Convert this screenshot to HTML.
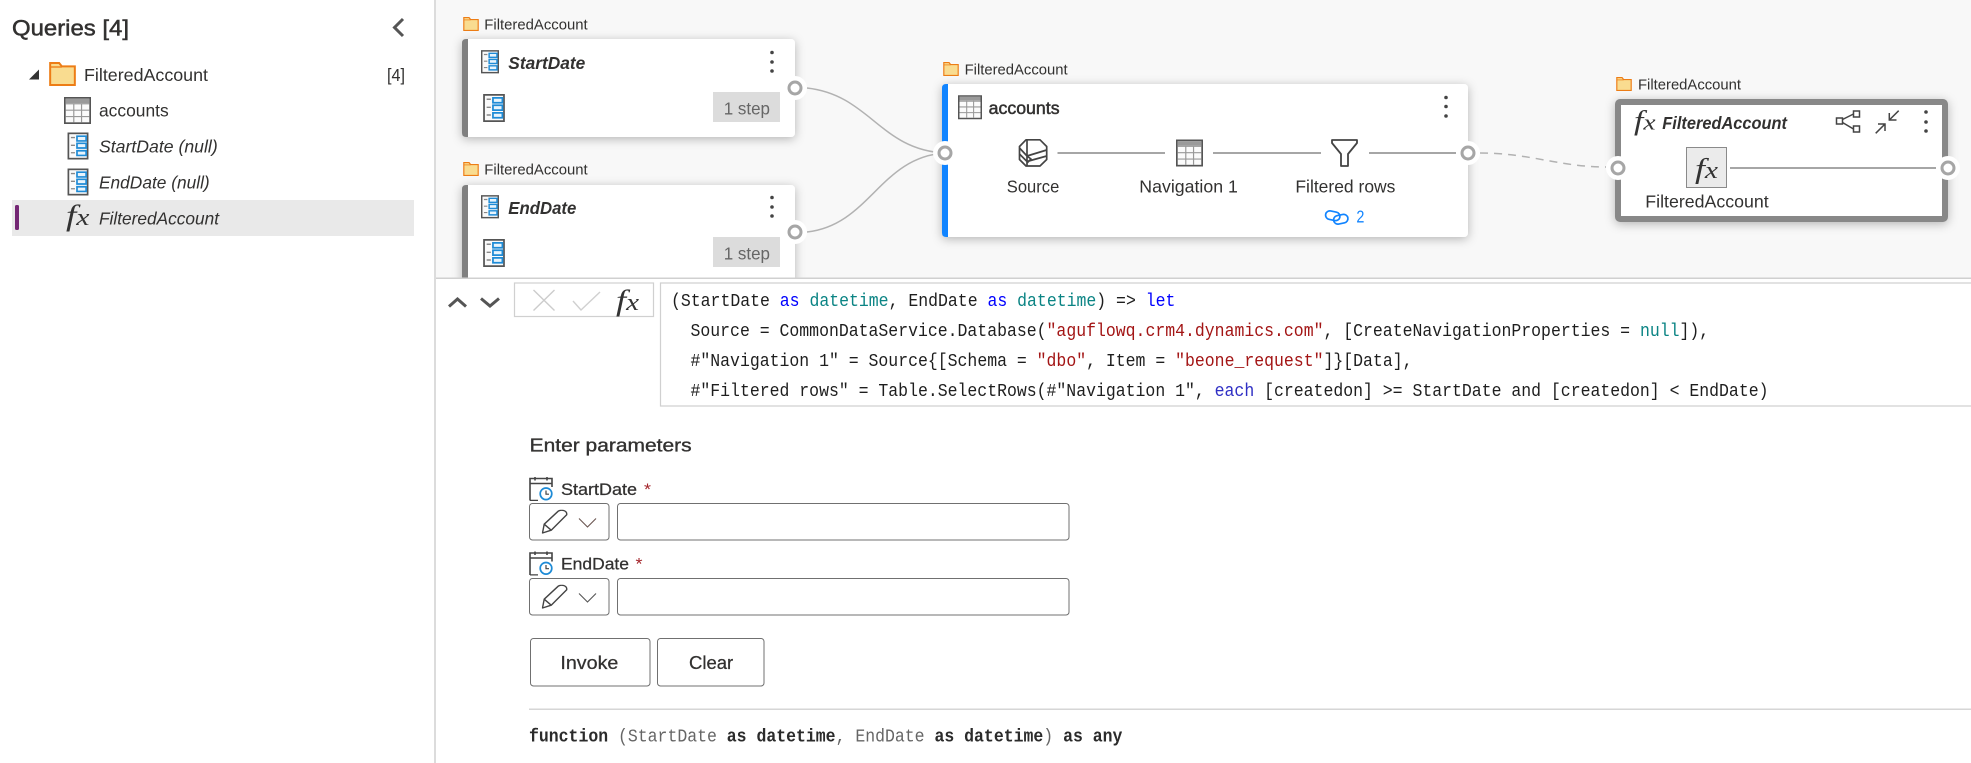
<!DOCTYPE html>
<html lang="en">
<head>
<meta charset="utf-8">
<title>Queries</title>
<style>
html,body{margin:0;padding:0;background:#fff;width:1971px;height:763px;overflow:hidden}
svg{display:block}
text{font-family:"Liberation Sans",sans-serif;fill:#323130;font-size:17.5px}
.semi{stroke:#323130;stroke-width:.5px}
.it{font-style:italic}
.bi{font-style:italic;font-weight:700}
.fl{font-size:14.5px}
.m{font-family:"Liberation Mono",monospace;font-size:18px;white-space:pre;fill:#1e1e1e}
.kw{fill:#0000ff}.ty{fill:#0b8484}.st{fill:#a31515}.ea{fill:#2f2fc4}
.mb{font-weight:700;fill:#2b2b2b}.gr{fill:#666}
.fx{font-family:"Liberation Serif",serif;font-style:italic;fill:#333}
.ln{stroke:#a6a6a6;stroke-width:2;fill:none}
</style>
</head>
<body>
<svg width="1971" height="763" viewBox="0 0 1971 763" xmlns="http://www.w3.org/2000/svg">
<defs>
<filter id="sh" x="-10%" y="-20%" width="120%" height="150%"><feDropShadow dx="0" dy="2" stdDeviation="5" flood-color="#000" flood-opacity=".28"/></filter>
<symbol id="folder" viewBox="0 0 80 72"><path d="M3 69V3H30L38 13H77V69Z" fill="#f9dc90" stroke="#ed7d16" stroke-width="6"/><path d="M3 15H38" stroke="#ed7d16" stroke-width="4" fill="none"/></symbol>
<symbol id="param" viewBox="0 0 62 80"><rect x="2.500" y="2.500" width="57" height="75" fill="#fafafa" stroke="#555" stroke-width="5"/><path d="M10 15H22M10 38H22M10 60H22" stroke="#888" stroke-width="4"/><path d="M28 11H55V25H28ZM28 32H55V46H28ZM28 54H55V68H28Z" fill="#e8f4fc" stroke="#1e8bd6" stroke-width="5"/></symbol>
<symbol id="table" viewBox="0 0 80 80"><rect x="2.500" y="2.500" width="75" height="75" fill="#fbfbfb" stroke="#555" stroke-width="5"/><rect x="5" y="5" width="70" height="13" fill="#9a9a9a"/><path d="M5 20H75M5 39H75M5 58H75M29 18V75M52 18V75" stroke="#999" stroke-width="3.500"/></symbol>
<symbol id="cal" viewBox="0 0 24 24"><path d="M1 23.500V1.500H23V10M1 6.500H23M6 0V3.500M18 0V3.500M1 23.500H9" fill="none" stroke="#444" stroke-width="1.600"/><circle cx="17" cy="16.800" r="5.800" fill="#fff" stroke="#1e8bd6" stroke-width="1.700"/><path d="M17 13.500V17.200H20" fill="none" stroke="#444" stroke-width="1.200"/></symbol>
<symbol id="pen" viewBox="0 0 26 24"><path d="M.8 23.300L2.500 14.500L16.500 1.500Q19 -.2 22 .8Q25.500 2 25 5L9.500 20.500ZM2.500 14.500L9.500 20.500" fill="#fff" stroke="#444" stroke-width="1.400" stroke-linejoin="round"/></symbol>
</defs>

<!-- graph area -->
<rect x="436" y="0" width="1535" height="278" fill="#f8f8f8"/>

<!-- connectors -->
<path d="M807 88C870 95 880 150 945 153" fill="none" stroke="#b2b2b2" stroke-width="1.500"/>
<path d="M807 232C870 225 880 157 945 153" fill="none" stroke="#b2b2b2" stroke-width="1.500"/>
<path d="M1480 153C1530 153 1560 167 1606 167" fill="none" stroke="#b2b2b2" stroke-width="1.500" stroke-dasharray="8 6"/>

<!-- StartDate card -->
<use href="#folder" x="462" y="17" width="18" height="14"/>
<text class="fl" x="484.300" y="29.300" textLength="103.400" lengthAdjust="spacingAndGlyphs">FilteredAccount</text>
<g filter="url(#sh)"><rect x="462" y="39" width="333" height="98" rx="4" fill="#fff"/></g>
<path d="M468 39H466Q462 39 462 43V133Q462 137 466 137H468Z" fill="#808080"/>
<use href="#param" x="481" y="50" width="18" height="23.500"/>
<text class="bi" x="508.300" y="69" textLength="77" lengthAdjust="spacingAndGlyphs">StartDate</text>
<g fill="#444"><circle cx="772" cy="52.500" r="1.800"/><circle cx="772" cy="62" r="1.800"/><circle cx="772" cy="71" r="1.800"/></g>
<use href="#param" x="483" y="94" width="22" height="28"/>
<rect x="713" y="92" width="67" height="30" fill="#dcdcdc"/>
<text x="723.700" y="114.300" textLength="46.300" lengthAdjust="spacingAndGlyphs" style="fill:#666">1 step</text>

<!-- EndDate card -->
<use href="#folder" x="462" y="162" width="18" height="14"/>
<text class="fl" x="484.300" y="174.300" textLength="103.400" lengthAdjust="spacingAndGlyphs">FilteredAccount</text>
<g filter="url(#sh)"><rect x="462" y="185" width="333" height="110" rx="4" fill="#fff"/></g>
<path d="M468 185H466Q462 185 462 189V290H468Z" fill="#808080"/>
<use href="#param" x="481" y="195" width="18" height="23.500"/>
<text class="bi" x="508.300" y="214" textLength="68" lengthAdjust="spacingAndGlyphs">EndDate</text>
<g fill="#444"><circle cx="772" cy="197.500" r="1.800"/><circle cx="772" cy="207" r="1.800"/><circle cx="772" cy="216" r="1.800"/></g>
<use href="#param" x="483" y="239" width="22" height="28"/>
<rect x="713" y="237" width="67" height="30" fill="#dcdcdc"/>
<text x="723.700" y="259.300" textLength="46.300" lengthAdjust="spacingAndGlyphs" style="fill:#666">1 step</text>

<!-- accounts card -->
<use href="#folder" x="942" y="62" width="18" height="14"/>
<text class="fl" x="964.600" y="74.300" textLength="103" lengthAdjust="spacingAndGlyphs">FilteredAccount</text>
<g filter="url(#sh)"><rect x="942" y="84" width="526" height="153" rx="4" fill="#fff"/></g>
<path d="M948 84H946Q942 84 942 88V233Q942 237 946 237H948Z" fill="#1184ff"/>
<use href="#table" x="958" y="95" width="24" height="24.500"/>
<text class="semi" x="988.600" y="114" textLength="71" lengthAdjust="spacingAndGlyphs">accounts</text>
<g fill="#444"><circle cx="1446" cy="97.500" r="1.800"/><circle cx="1446" cy="106.500" r="1.800"/><circle cx="1446" cy="116" r="1.800"/></g>
<!-- source icon -->
<g fill="none" stroke="#444" stroke-width="1.700" stroke-linejoin="round">
<path d="M1026 139.800H1040L1046.700 146.500V159.500L1040 166H1026L1019.500 159.500V146.500Z"/>
<path d="M1019.500 148L1027 156L1046.700 150M1019.500 154L1027 161.500L1046.700 156M1027 139.800V166M1027 156L1031 159L1027 163"/>
</g>
<path class="ln" d="M1057.500 153H1165M1213 153H1321M1369 153H1456"/>
<use href="#table" x="1176" y="139" width="27" height="28"/>
<path d="M1332 140H1357V143L1348 154V166H1341V154L1332 143Z" fill="#fff" stroke="#444" stroke-width="1.800" stroke-linejoin="round"/>
<text x="1006.800" y="192.300" textLength="52.500" lengthAdjust="spacingAndGlyphs">Source</text>
<text x="1139.300" y="192.300" textLength="98.600" lengthAdjust="spacingAndGlyphs">Navigation 1</text>
<text x="1295.400" y="192.300" textLength="100" lengthAdjust="spacingAndGlyphs">Filtered rows</text>
<g fill="none" stroke="#1184ff" stroke-width="1.700">
<rect x="1325.500" y="211.500" width="14.500" height="8.500" rx="4.250" transform="rotate(12 1332.700 215.700)"/>
<rect x="1333.500" y="215" width="14.500" height="8.500" rx="4.250" transform="rotate(-12 1340.700 219.200)"/>
</g>
<text x="1356.400" y="222.300" textLength="8" lengthAdjust="spacingAndGlyphs" style="fill:#1184ff">2</text>

<!-- fx card -->
<use href="#folder" x="1615" y="77" width="18" height="14"/>
<text class="fl" x="1638" y="89.300" textLength="103" lengthAdjust="spacingAndGlyphs">FilteredAccount</text>
<g filter="url(#sh)"><rect x="1618" y="102" width="327" height="117" rx="2" fill="#fff" stroke="#888" stroke-width="6"/></g>
<text class="fx" x="1634" y="129.500" style="font-size:27px" textLength="21.500" lengthAdjust="spacingAndGlyphs">f<tspan style="font-size:22px">x</tspan></text>
<text class="bi" x="1662.300" y="129" textLength="124.700" lengthAdjust="spacingAndGlyphs">FilteredAccount</text>
<g fill="#fff" stroke="#444" stroke-width="1.500">
<rect x="1836.500" y="118" width="6" height="6"/><rect x="1853.500" y="111" width="6" height="6"/><rect x="1853.500" y="126" width="6" height="6"/>
<path d="M1842.500 119.500L1853.500 114M1842.500 122.500L1853.500 129" fill="none"/>
</g>
<path d="M1898.700 110.700L1889.300 120M1889.300 113V120H1896.500M1875.700 133.300L1885 124M1878 124H1885V131" fill="none" stroke="#444" stroke-width="1.500"/>
<g fill="#444"><circle cx="1926" cy="112" r="1.800"/><circle cx="1926" cy="122" r="1.800"/><circle cx="1926" cy="131" r="1.800"/></g>
<rect x="1686.500" y="147.500" width="40" height="40" fill="#ebebeb" stroke="#8a8a8a"/>
<text class="fx" x="1695" y="178" style="font-size:29px" textLength="23" lengthAdjust="spacingAndGlyphs">f<tspan style="font-size:24px">x</tspan></text>
<path class="ln" d="M1730 168H1936"/>
<text x="1645.300" y="207.300" textLength="123.400" lengthAdjust="spacingAndGlyphs">FilteredAccount</text>

<!-- ports -->
<g fill="#fff">
<circle cx="795" cy="88" r="12"/><circle cx="795" cy="232" r="12"/><circle cx="945" cy="153" r="12"/><circle cx="1468" cy="153" r="12"/><circle cx="1618" cy="168" r="12"/><circle cx="1948" cy="168" r="12"/>
</g>
<g fill="#fff" stroke="#a6a6a6" stroke-width="3">
<circle cx="795" cy="88" r="6"/><circle cx="795" cy="232" r="6"/><circle cx="945" cy="153" r="6"/><circle cx="1468" cy="153" r="6"/><circle cx="1618" cy="168" r="6"/><circle cx="1948" cy="168" r="6"/>
</g>

<!-- lower pane -->
<rect x="436" y="278" width="1535" height="485" fill="#fff"/>
<rect x="436" y="277.500" width="1535" height="1.500" fill="#d0d0d0"/>

<!-- sidebar -->
<rect x="0" y="0" width="434" height="763" fill="#fff"/>
<rect x="434" y="0" width="2" height="763" fill="#dcdcdc"/>
<text class="semi" x="12" y="35.500" textLength="117" lengthAdjust="spacingAndGlyphs" style="font-size:22px">Queries [4]</text>
<path d="M403 19L394.500 27.500L403 36" fill="none" stroke="#555" stroke-width="3"/>
<path d="M39 69.500V79.500H29Z" fill="#333"/>
<use href="#folder" x="49" y="62" width="27" height="24"/>
<text x="84" y="81" textLength="124" lengthAdjust="spacingAndGlyphs">FilteredAccount</text>
<text x="387" y="81" textLength="18" lengthAdjust="spacingAndGlyphs">[4]</text>
<use href="#table" x="64" y="97" width="27" height="27"/>
<text x="99" y="116.700" textLength="69.700" lengthAdjust="spacingAndGlyphs">accounts</text>
<use href="#param" x="67.500" y="132.500" width="21" height="27"/>
<text class="it" x="99" y="152.700" textLength="118.700" lengthAdjust="spacingAndGlyphs">StartDate (null)</text>
<use href="#param" x="67.500" y="168.500" width="21" height="27"/>
<text class="it" x="99" y="188.700" textLength="110.700" lengthAdjust="spacingAndGlyphs">EndDate (null)</text>
<rect x="12" y="200" width="402" height="36" fill="#e9e9e9"/>
<rect x="15" y="205" width="4" height="25" rx="1.500" fill="#742774"/>
<text class="fx" x="66" y="225" style="font-size:30px" textLength="23.500" lengthAdjust="spacingAndGlyphs">f<tspan style="font-size:24px">x</tspan></text>
<text class="it" x="99" y="224.700" textLength="120" lengthAdjust="spacingAndGlyphs">FilteredAccount</text>

<!-- formula bar -->
<path d="M449 306.500L457.500 299L466 306.500M481 298.500L490 306L499 298.500" fill="none" stroke="#555" stroke-width="3"/>
<rect x="514.500" y="283" width="139" height="33.500" fill="#fff" stroke="#d0d0d0" stroke-width="1.200"/>
<path d="M533.500 290L554.500 310.500M554.500 290L533.500 310.500" stroke="#ccc" stroke-width="1.400"/>
<path d="M573 301L581 310L600 292" fill="none" stroke="#d0d0d0" stroke-width="1.400"/>
<text class="fx" x="616" y="310" style="font-size:30px" textLength="23" lengthAdjust="spacingAndGlyphs">f<tspan style="font-size:24px">x</tspan></text>
<path d="M1971 283H660.500V406H1971" fill="#fff" stroke="#d0d0d0" stroke-width="1.200"/>

<text class="m" x="671" y="306" textLength="504.400" lengthAdjust="spacingAndGlyphs">(StartDate <tspan class="kw">as</tspan> <tspan class="ty">datetime</tspan>, EndDate <tspan class="kw">as</tspan> <tspan class="ty">datetime</tspan>) =&gt; <tspan class="kw">let</tspan></text>
<text class="m" x="690.500" y="336" textLength="1018.700" lengthAdjust="spacingAndGlyphs">Source = CommonDataService.Database(<tspan class="st">"aguflowq.crm4.dynamics.com"</tspan>, [CreateNavigationProperties = <tspan class="ty">null</tspan>]),</text>
<text class="m" x="690.500" y="366" textLength="722" lengthAdjust="spacingAndGlyphs">#"Navigation 1" = Source{[Schema = <tspan class="st">"dbo"</tspan>, Item = <tspan class="st">"beone_request"</tspan>]}[Data],</text>
<text class="m" x="690.500" y="396" textLength="1078" lengthAdjust="spacingAndGlyphs">#"Filtered rows" = Table.SelectRows(#"Navigation 1", <tspan class="ea">each</tspan> [createdon] &gt;= StartDate and [createdon] &lt; EndDate)</text>

<!-- parameters -->
<text class="semi" x="529.600" y="451.700" textLength="162" lengthAdjust="spacingAndGlyphs" style="font-size:18.500px;stroke-width:.35px">Enter parameters</text>

<use href="#cal" x="529" y="477" width="24" height="24"/>
<text x="561" y="495" textLength="76" lengthAdjust="spacingAndGlyphs" style="font-size:16.500px;stroke:#323130;stroke-width:.25px">StartDate</text>
<text x="644" y="495" textLength="7" lengthAdjust="spacingAndGlyphs" style="font-size:16.500px;fill:#a4262c">*</text>
<rect x="529.500" y="503.500" width="79.500" height="36.500" rx="3" fill="#fff" stroke="#707070"/>
<use href="#pen" x="541.700" y="509.700" width="26" height="24"/>
<path d="M579 518.500L587.500 527L596 518.500" fill="none" stroke="#6a5550" stroke-width="1.100"/>
<rect x="617.500" y="503.500" width="451.500" height="36.500" rx="3" fill="#fff" stroke="#707070"/>

<use href="#cal" x="529" y="551.500" width="24" height="24"/>
<text x="561" y="569.700" textLength="68" lengthAdjust="spacingAndGlyphs" style="font-size:16.500px;stroke:#323130;stroke-width:.25px">EndDate</text>
<text x="635.500" y="569.700" textLength="7" lengthAdjust="spacingAndGlyphs" style="font-size:16.500px;fill:#a4262c">*</text>
<rect x="529.500" y="578.500" width="79.500" height="36.500" rx="3" fill="#fff" stroke="#707070"/>
<use href="#pen" x="541.700" y="584.700" width="26" height="24"/>
<path d="M579 593.500L587.500 602L596 593.500" fill="none" stroke="#555" stroke-width="1.100"/>
<rect x="617.500" y="578.500" width="451.500" height="36.500" rx="3" fill="#fff" stroke="#707070"/>

<rect x="530.500" y="638.500" width="119.500" height="47.500" rx="3" fill="#fff" stroke="#707070"/>
<text x="560.400" y="669" textLength="58" lengthAdjust="spacingAndGlyphs" style="font-size:18px;stroke:#323130;stroke-width:.25px">Invoke</text>
<rect x="657.500" y="638.500" width="106.500" height="47.500" rx="3" fill="#fff" stroke="#707070"/>
<text x="689" y="669" textLength="44.200" lengthAdjust="spacingAndGlyphs" style="font-size:18px;stroke:#323130;stroke-width:.25px">Clear</text>

<rect x="529" y="708.500" width="1442" height="1.500" fill="#d6d6d6"/>
<text class="m" x="529" y="741.700" textLength="593.400" lengthAdjust="spacingAndGlyphs"><tspan class="mb">function</tspan> <tspan class="gr">(StartDate</tspan> <tspan class="mb">as datetime</tspan><tspan class="gr">, EndDate</tspan> <tspan class="mb">as datetime</tspan><tspan class="gr">)</tspan> <tspan class="mb">as any</tspan></text>
</svg>
</body>
</html>
